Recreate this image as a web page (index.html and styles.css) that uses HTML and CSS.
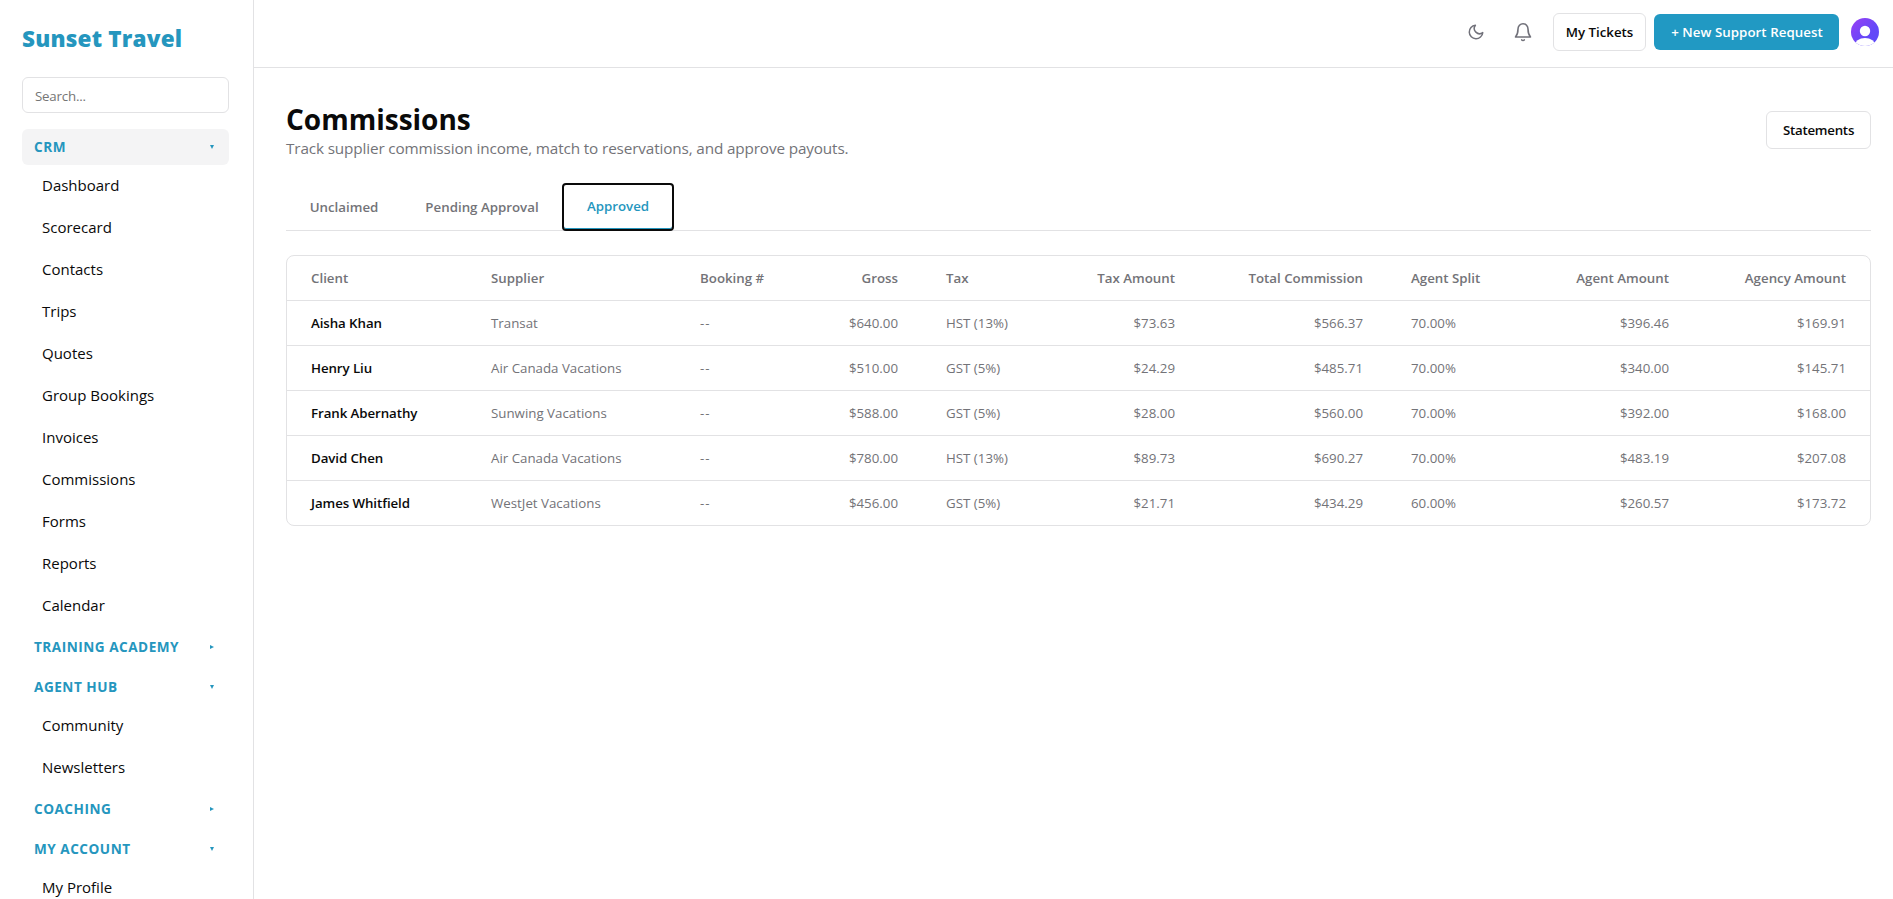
FILE: index.html
```html
<!DOCTYPE html>
<html lang="en">
<head>
  <meta charset="UTF-8" />
  <meta name="viewport" content="width=device-width, initial-scale=1.0" />
  <title>Sunset Travel - Commissions</title>
  <link rel="stylesheet" href="styles.css">
</head>
<body>
  <div class="app">
    <aside class="sidebar">
      <div class="brand">Sunset Travel</div>
      <input class="search" type="text" placeholder="Search..." />

      <nav class="nav">
        <div class="nav-section">
          <button class="nav-heading active"><span>CRM</span><i class="arrow down"></i></button>
          <div class="nav-items">
            <a class="nav-item">Dashboard</a>
            <a class="nav-item">Scorecard</a>
            <a class="nav-item">Contacts</a>
            <a class="nav-item">Trips</a>
            <a class="nav-item">Quotes</a>
            <a class="nav-item">Group Bookings</a>
            <a class="nav-item">Invoices</a>
            <a class="nav-item">Commissions</a>
            <a class="nav-item">Forms</a>
            <a class="nav-item">Reports</a>
            <a class="nav-item">Calendar</a>
          </div>
        </div>
        <div class="nav-section">
          <button class="nav-heading"><span>TRAINING ACADEMY</span><i class="arrow"></i></button>
        </div>
        <div class="nav-section">
          <button class="nav-heading"><span>AGENT HUB</span><i class="arrow down"></i></button>
          <div class="nav-items">
            <a class="nav-item">Community</a>
            <a class="nav-item">Newsletters</a>
          </div>
        </div>
        <div class="nav-section">
          <button class="nav-heading"><span>COACHING</span><i class="arrow"></i></button>
        </div>
        <div class="nav-section">
          <button class="nav-heading"><span>MY ACCOUNT</span><i class="arrow down"></i></button>
          <div class="nav-items">
            <a class="nav-item">My Profile</a>
          </div>
        </div>
      </nav>
    </aside>

    <div class="content">
      <header class="topbar">
        <button class="icon-btn" aria-label="Theme">
          <svg width="18" height="18" viewBox="0 0 24 24" fill="none" stroke="currentColor" stroke-width="2" stroke-linecap="round" stroke-linejoin="round"><path d="M21 12.8A9 9 0 1 1 11.2 3a7 7 0 0 0 9.8 9.8z"/></svg>
        </button>
        <button class="icon-btn bell" aria-label="Notifications">
          <svg width="20" height="20" viewBox="0 0 24 24" fill="none" stroke="currentColor" stroke-width="1.9" stroke-linecap="round" stroke-linejoin="round"><path d="M18 8.500A6 6.500 0 0 0 6 8.500c0 6-1.200 7.500-3 9.500h18c-1.800-2-3-3.500-3-9.500"/><path d="M13.500 21.500a2 2 0 0 1-3 0"/></svg>
        </button>
        <button class="btn tickets">My Tickets</button>
        <button class="btn primary">+ New Support Request</button>
        <svg class="avatar" width="28" height="28" viewBox="0 0 28 28">
          <defs>
            <linearGradient id="avatarFill" x1="0" y1="0" x2="1" y2="1">
              <stop offset="0" stop-color="#9a3ff5"/>
              <stop offset="0.6" stop-color="#6548f8"/>
              <stop offset="1" stop-color="#5b4cf8"/>
            </linearGradient>
            <clipPath id="avatarClip"><circle cx="14" cy="14" r="14"/></clipPath>
          </defs>
          <g clip-path="url(#avatarClip)">
            <rect width="28" height="28" fill="url(#avatarFill)"/>
            <circle cx="14" cy="13" r="5.2" fill="#fff"/>
            <ellipse cx="14" cy="27.5" rx="10.5" ry="7.5" fill="#fff"/>
          </g>
        </svg>
      </header>

      <main class="main">
        <div class="page-head">
          <div>
            <h1>Commissions</h1>
            <p class="subtitle">Track supplier commission income, match to reservations, and approve payouts.</p>
          </div>
          <button class="btn statements">Statements</button>
        </div>

        <div class="tabs">
          <button class="tab unclaimed">Unclaimed</button>
          <button class="tab pending">Pending Approval</button>
          <button class="tab selected">Approved</button>
        </div>

        <div class="table-card">
          <table>
            <thead>
              <tr>
                <th class="col-client">Client</th>
                <th class="col-supplier">Supplier</th>
                <th class="col-booking">Booking #</th>
                <th class="col-gross num">Gross</th>
                <th class="col-tax">Tax</th>
                <th class="col-taxamt num">Tax Amount</th>
                <th class="col-total num">Total Commission</th>
                <th class="col-split">Agent Split</th>
                <th class="col-agent num">Agent Amount</th>
                <th class="col-agency num">Agency Amount</th>
              </tr>
            </thead>
            <tbody>
              <tr><td class="client">Aisha Khan</td><td>Transat</td><td class="empty">--</td><td class="num">$640.00</td><td>HST (13%)</td><td class="num">$73.63</td><td class="num">$566.37</td><td>70.00%</td><td class="num">$396.46</td><td class="num">$169.91</td></tr>
              <tr><td class="client">Henry Liu</td><td>Air Canada Vacations</td><td class="empty">--</td><td class="num">$510.00</td><td>GST (5%)</td><td class="num">$24.29</td><td class="num">$485.71</td><td>70.00%</td><td class="num">$340.00</td><td class="num">$145.71</td></tr>
              <tr><td class="client">Frank Abernathy</td><td>Sunwing Vacations</td><td class="empty">--</td><td class="num">$588.00</td><td>GST (5%)</td><td class="num">$28.00</td><td class="num">$560.00</td><td>70.00%</td><td class="num">$392.00</td><td class="num">$168.00</td></tr>
              <tr><td class="client">David Chen</td><td>Air Canada Vacations</td><td class="empty">--</td><td class="num">$780.00</td><td>HST (13%)</td><td class="num">$89.73</td><td class="num">$690.27</td><td>70.00%</td><td class="num">$483.19</td><td class="num">$207.08</td></tr>
              <tr><td class="client">James Whitfield</td><td>WestJet Vacations</td><td class="empty">--</td><td class="num">$456.00</td><td>GST (5%)</td><td class="num">$21.71</td><td class="num">$434.29</td><td>60.00%</td><td class="num">$260.57</td><td class="num">$173.72</td></tr>
            </tbody>
          </table>
        </div>
      </main>
    </div>
  </div>
</body>
</html>
```

FILE: styles.css
```css
* {
  box-sizing: border-box;
}

body {
  margin: 0;
  font-family: 'Segoe UI', 'Open Sans', 'Noto Sans', sans-serif;
  background: #fff;
  color: #0a0a0a;
}

button, input {
  font-family: inherit;
}

button {
  cursor: pointer;
}

.app {
  display: flex;
  height: 100vh;
  overflow: hidden;
}

/* sidebar */
.sidebar {
  width: 254px;
  flex-shrink: 0;
  padding: 22px 24px 0 22px;
  border-right: 1px solid #e2e2e4;
  overflow: hidden;
}

.brand {
  height: 33px;
  line-height: 33px;
  font-size: 22.5px;
  font-weight: 800;
  letter-spacing: 0.2px;
  color: #2596be;
}

.search {
  display: block;
  width: 207px;
  height: 36px;
  margin-top: 22px;
  padding: 2px 12px 0;
  font-size: 13.3px;
  letter-spacing: -0.2px;
  border: 1px solid #e2e2e4;
  border-radius: 6px;
  background: #fff;
}

.search::placeholder {
  color: #757575;
}

.nav {
  display: flex;
  flex-direction: column;
  gap: 4px;
  width: 207px;
  margin-top: 16px;
}

.nav-heading {
  display: flex;
  align-items: center;
  justify-content: space-between;
  width: 100%;
  height: 36px;
  padding: 0 15px 1px 12px;
  font-size: 13.6px;
  font-weight: 700;
  letter-spacing: 0.5px;
  color: #2596be;
  background: none;
  border: none;
  border-radius: 6px;
}

.nav-heading.active {
  background: #f4f4f5;
}

.arrow {
  margin-top: 1px;
  border-left: 4px solid #2596be;
  border-top: 2.5px solid transparent;
  border-bottom: 2.5px solid transparent;
}

.arrow.down {
  border-top: 4px solid #2596be;
  border-bottom: none;
  border-left: 2.5px solid transparent;
  border-right: 2.5px solid transparent;
}

.nav-items {
  display: flex;
  flex-direction: column;
  gap: 2px;
}

.nav-item {
  height: 40px;
  line-height: 40px;
  padding-left: 20px;
  font-size: 15px;
}

/* top bar */
.content {
  flex: 1;
  min-width: 0;
}

.topbar {
  display: flex;
  align-items: center;
  justify-content: flex-end;
  height: 68px;
  padding: 0 14px 4px 0;
  border-bottom: 1px solid #e2e2e4;
}

.icon-btn {
  display: flex;
  align-items: center;
  justify-content: center;
  width: 36px;
  height: 36px;
  margin-right: 11px;
  padding: 0;
  color: #71717a;
  background: none;
  border: none;
}

.icon-btn.bell {
  margin-right: 12px;
}

.btn {
  height: 38px;
  padding: 0;
  font-size: 13.3px;
  font-weight: 600;
  color: #0a0a0a;
  background: #fff;
  border: 1px solid #e2e2e4;
  border-radius: 6px;
  white-space: nowrap;
}

.tickets {
  width: 93px;
}

.primary {
  width: 185px;
  height: 36px;
  margin: 0 12px 0 8px;
  padding-left: 1px;
  letter-spacing: 0.05px;
  color: #fff;
  background: #2199c3;
  border: none;
}

/* page */
.main {
  padding: 33px 22px 0 32px;
}

.page-head {
  display: flex;
  justify-content: space-between;
}

h1 {
  margin: 0;
  font-size: 28px;
  line-height: 36px;
  font-weight: 700;
}

.subtitle {
  margin: 0;
  font-size: 15.3px;
  line-height: 22px;
  letter-spacing: -0.14px;
  color: #737378;
}

.statements {
  width: 105px;
  margin-top: 10px;
  letter-spacing: -0.25px;
}

.tabs {
  display: flex;
  height: 48px;
  margin-top: 24px;
  border-bottom: 1px solid #e2e2e4;
}

.tab {
  height: 48px;
  padding: 0 0 1px;
  font-size: 13.3px;
  font-weight: 600;
  color: #737378;
  background: none;
  border: none;
}

.unclaimed {
  width: 115px;
  padding-left: 1px;
}

.pending {
  width: 161px;
  padding-left: 1px;
}

.selected {
  width: 112px;
  padding-bottom: 2px;
  color: #2596be;
  border: 2px solid #0a0a0a;
  border-radius: 4px;
  box-shadow: inset 0 -1px 0 #2596be;
}

.table-card {
  margin-top: 24px;
  border: 1px solid #e2e2e4;
  border-radius: 8px;
  overflow: hidden;
}

table {
  width: 100%;
  table-layout: fixed;
  border-collapse: separate;
  border-spacing: 0;
  font-size: 13.3px;
  color: #737378;
}

th, td {
  height: 45px;
  padding: 0 24px;
  text-align: left;
  white-space: nowrap;
  border-bottom: 1px solid #e2e2e4;
}

tbody tr:last-child td {
  height: 44px;
  border-bottom: none;
}

th {
  font-weight: 600;
}

.num {
  text-align: right;
}

.client {
  font-weight: 600;
  letter-spacing: -0.08px;
  color: #0a0a0a;
}

.empty {
  letter-spacing: 1px;
}

.col-client { width: 180px; }
.col-supplier { width: 209px; }
.col-booking { width: 134px; }
.col-gross { width: 112px; }
.col-tax { width: 150px; }
.col-taxamt { width: 127px; }
.col-total { width: 188px; }
.col-split { width: 140px; }
.col-agent { width: 166px; }
.col-agency { width: 177px; }
```
